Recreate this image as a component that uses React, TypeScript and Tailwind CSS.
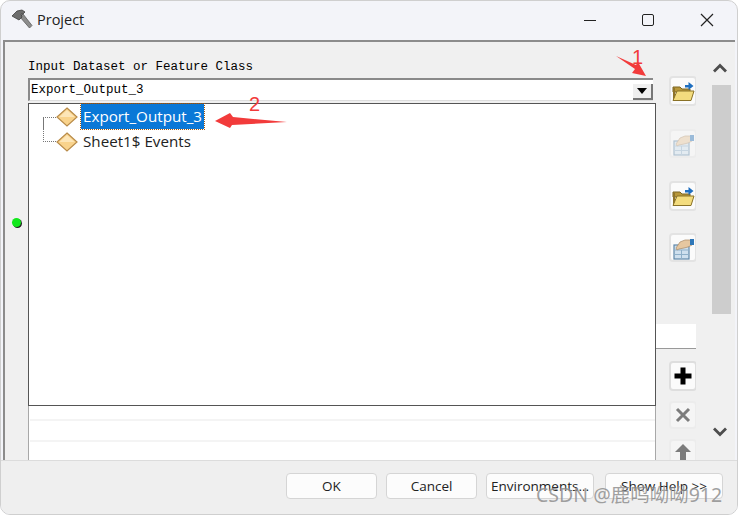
import React from 'react';

const FolderIcon = () => (
  <svg viewBox="0 0 24 24" width="24" height="24">
    <path d="M2 8h7l2 2h8v3H2z" fill="#b8973a" stroke="#7a6420" strokeWidth="1" />
    <path d="M2 21V9h2v12z" fill="#8f7428" />
    <path d="M6 12h17l-3 9.500H2z" fill="#f3dc7e" stroke="#8a7227" strokeWidth="1" />
    <path d="M14 6h3.500V3l5 4-5 4V8.500H14z" fill="#1f6fc0" />
  </svg>
);

const HandTableIcon = ({ faded = false }: { faded?: boolean }) => (
  <svg viewBox="0 0 24 24" width="24" height="24" opacity={faded ? 0.45 : 1}>
    <rect x="3" y="9" width="15" height="14" fill="#cfe0ee" stroke="#5f87a8" strokeWidth="1.200" />
    <path d="M3 14h15M3 18.500h15M10.500 14v9" stroke="#8fb0c9" strokeWidth="1" />
    <path d="M5 12l4-6 5-2h6l1 5-4 2-4 1-5 1-2 1z" fill="#e6c7a0" stroke="#a98a66" strokeWidth="0.700" />
    <path d="M19 3h4v6h-4z" fill="#2f77b8" />
  </svg>
);

const ToolButton = ({ children, className = '' }: { children: React.ReactNode; className?: string }) => (
  <div className={`w-[28px] shrink-0 flex items-center justify-center rounded-[4px] border-2 ${className}`}>{children}</div>
);

const Diamond = () => (
  <svg viewBox="0 0 22 22" width="22" height="22" className="shrink-0">
    <path d="M11 2L21 11 11 20 1 11z" fill="#f9d38c" stroke="#b98c4a" strokeWidth="1.200" />
    <path d="M11 4L18.500 11H3.500z" fill="#fde6b8" />
  </svg>
);

const FooterButton = ({ label, width }: { label: string; width: string }) => (
  <div className={`${width} h-[26px] rounded-[4px] border border-[#d5d5d5] bg-[#fcfcfc] flex items-center justify-center text-[13.500px] text-[#222] whitespace-nowrap`}>
    {label}
  </div>
);

export default function App() {
  return (
    <div className="relative w-[738px] h-[515px] bg-white overflow-hidden font-['Open_Sans',sans-serif]">
      <div className="h-full flex flex-col rounded-[10px] border border-[#cfcfcf] bg-[#f3f4f9] overflow-hidden">
        {/* title bar */}
        <div className="h-[39px] shrink-0 flex items-center pl-[10px]">
          <svg viewBox="0 0 22 22" width="22" height="22" className="-mt-[2px]">
            <path d="M9 8l3-3 9 11.500-2.500 2.500z" fill="#8d8d8d" stroke="#5d5d5d" strokeWidth="0.800" />
            <path d="M1 7l5-5 5-1 3 2-2 2-2 0 1 3-3 3z" fill="#6d6d6d" stroke="#3f3f3f" strokeWidth="0.800" />
          </svg>
          <span className="ml-[4px] -mt-[2px] text-[14.500px] text-[#222]">Project</span>
          <div className="ml-auto flex items-center -mt-[1px]">
            <div className="w-[58px] flex justify-center">
              <div className="w-[12px] h-[1px] bg-[#222]" />
            </div>
            <div className="w-[58px] flex justify-center">
              <div className="w-[12px] h-[12px] rounded-[2px] border-[1.500px] border-[#222]" />
            </div>
            <div className="w-[60px] flex justify-center pr-[1px]">
              <svg viewBox="0 0 14 14" width="14" height="14">
                <path d="M1 1l12 12M13 1L1 13" stroke="#222" strokeWidth="1.200" />
              </svg>
            </div>
          </div>
        </div>

        {/* dialog body */}
        <div className="flex-1 min-h-0 flex ml-[2px] mr-[2px] border-l-2 border-t-2 border-[#8c8c8c] bg-[#f0f0f0] overflow-hidden">
          <div className="w-[23px] shrink-0 pt-[176px] pl-[7px]">
            <div className="w-[9px] h-[9px] rounded-full bg-[#12e81c] shadow-[1px_1px_0_#222]" />
          </div>

          <div className="w-[628px] shrink-0 flex flex-col pt-[15px]">
            <div className="h-[20px] flex items-center font-['Liberation_Mono',monospace] text-[12.500px] text-black">
              Input Dataset or Feature Class
            </div>
            <div className="mt-[1px] h-[23px] w-[625px] bg-white border-t-2 border-l-2 border-[#8a8a8a] border-b border-b-[#dddddd] flex items-center pl-[1px] font-['Liberation_Mono',monospace] text-[12.500px] text-black relative">
              Export_Output_3
              <div className="absolute right-0 bottom-0 w-[20px] h-[16px] bg-[#efefef] border-r-2 border-b-2 border-[#777] flex items-center justify-center">
                <div className="w-0 h-0 border-x-[5px] border-x-transparent border-t-[6px] border-t-black" />
              </div>
            </div>
            <div className="mt-[2px] h-[303px] shrink-0 bg-white border border-[#555] pl-[14px] relative">
              <div className="flex items-center h-[25px]">
                <div className="w-[13px] h-[12px] border-t border-l border-dotted border-[#777] mt-[12px] shrink-0" />
                <Diamond />
                <span className="ml-[3px] h-[25px] flex items-center px-[2px] bg-[#0a78d7] text-white text-[15.200px] outline-1 outline-dotted outline-[#a35a10]">
                  Export_Output_3
                </span>
              </div>
              <div className="flex items-center h-[25px]">
                <div className="w-[13px] h-[25px] border-b border-l border-dotted border-[#777] -mt-[12px] mb-[12px] shrink-0" />
                <Diamond />
                <span className="ml-[3px] px-[2px] text-[15.200px] text-[#222]">Sheet1$ Events</span>
              </div>
            </div>
            <div className="flex-1 min-h-0 bg-white border-x border-x-[#a8a8a8] flex flex-col pl-[1px]">
              <div className="h-[15px] border-b-2 border-[#f4f4f4]" />
              <div className="h-[21px] border-b-2 border-[#f4f4f4]" />
            </div>
          </div>

          <div className="w-[40px] shrink-0 flex flex-col overflow-hidden">
            <div className="pl-[13px] pt-[34px] flex flex-col shrink-0">
              <ToolButton className="h-[30px] bg-[#fbfbfb] border-[#e3e3e3]"><FolderIcon /></ToolButton>
              <ToolButton className="h-[29px] mt-[23px] bg-[#f5f5f5] border-[#ececec]"><HandTableIcon faded /></ToolButton>
              <ToolButton className="h-[30px] mt-[23px] bg-[#fbfbfb] border-[#e3e3e3]"><FolderIcon /></ToolButton>
              <ToolButton className="h-[29px] mt-[22px] bg-[#fbfbfb] border-[#e3e3e3]"><HandTableIcon /></ToolButton>
            </div>
            <div className="mt-[62px] h-[25px] shrink-0 bg-white border-b border-[#999]" />
            <div className="pl-[13px] pt-[12px] flex flex-col shrink-0">
              <ToolButton className="h-[30px] bg-[#fbfbfb] border-[#dedede]">
                <svg viewBox="0 0 20 20" width="20" height="20"><path d="M7.500 1.500h5v6h6v5h-6v6h-5v-6h-6v-5h6z" fill="#000" /></svg>
              </ToolButton>
              <ToolButton className="h-[28px] mt-[10px] bg-[#f5f5f5] border-[#ececec]">
                <svg viewBox="0 0 16 16" width="16" height="16"><path d="M2 2l12 12M14 2L2 14" stroke="#7c7c7c" strokeWidth="3" /></svg>
              </ToolButton>
              <ToolButton className="h-[28px] mt-[10px] bg-[#f5f5f5] border-[#ececec] items-start pt-[2px]">
                <svg viewBox="0 0 18 18" width="18" height="18"><path d="M9 1l8 8h-5v8H6V9H1z" fill="#7c7c7c" /></svg>
              </ToolButton>
            </div>
          </div>

          {/* scrollbar */}
          <div className="flex-1 flex flex-col items-center pl-[11px] pt-[21px]">
            <svg viewBox="0 0 16 10" width="16" height="10" className="shrink-0 -ml-[2px]"><path d="M2 8.500l6-6 6 6" fill="none" stroke="#4d4d4d" strokeWidth="2.800" /></svg>
            <div className="mt-[12px] w-[19px] h-[229px] shrink-0 bg-[#cdcdcd]" />
            <svg viewBox="0 0 16 10" width="16" height="10" className="mt-[113px] shrink-0 -ml-[2px]"><path d="M2 1.500l6 6 6-6" fill="none" stroke="#4d4d4d" strokeWidth="2.800" /></svg>
          </div>
        </div>

        {/* footer */}
        <div className="h-[54px] shrink-0 bg-[#efefef] border-t border-[#dcdcdc] flex items-center gap-[9px] pl-[285px] pb-[3px]">
          <FooterButton label="OK" width="w-[91px]" />
          <FooterButton label="Cancel" width="w-[91px]" />
          <div className="flex gap-[11px]">
            <FooterButton label="Environments..." width="w-[108px]" />
            <FooterButton label="Show Help >>" width="w-[118px]" />
          </div>
        </div>
      </div>

      {/* red annotations pasted on top of the screenshot */}
      <svg viewBox="0 0 738 515" width="738" height="515" className="absolute inset-0 pointer-events-none">
        <path d="M616 56L636 65 638 62 646 76 632 73 635 69z" fill="#f23b3b" />
        <path d="M215 121L230 113 233 117 287 122 232 125 230 128z" fill="#f23b3b" />
      </svg>
      <span className="absolute left-[632px] top-[44px] text-[20px] leading-[26px] text-[#f23b3b] font-['Liberation_Sans',sans-serif]">1</span>
      <span className="absolute left-[249px] top-[91px] text-[20px] leading-[26px] text-[#f23b3b] font-['Liberation_Sans',sans-serif]">2</span>

      <span className="absolute left-[536px] top-[482px] text-[19.500px] leading-[26px] whitespace-nowrap text-[#8a8a8a] opacity-80 [text-shadow:0_0_1px_#fff] font-['Noto_Sans','Noto_Sans_CJK_SC',sans-serif]">
        CSDN @鹿鸣呦呦912
      </span>
    </div>
  );
}
